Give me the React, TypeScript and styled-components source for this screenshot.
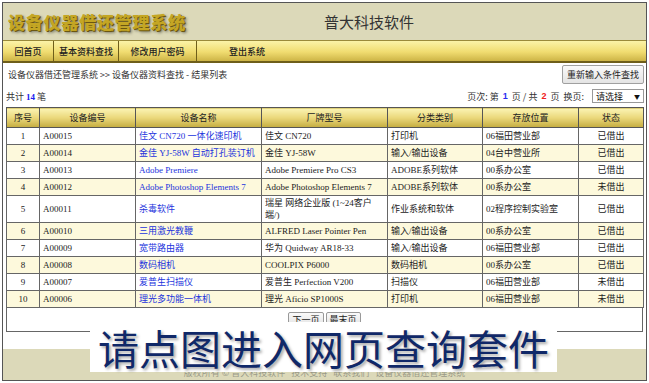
import styled, { createGlobalStyle } from 'styled-components'

const GlobalStyle = createGlobalStyle`
  html, body {
    margin: 0;
    padding: 0;
    background: #fff;
  }
  body {
    width: 649px;
    height: 383px;
    overflow: hidden;
    font-family: "Liberation Serif", "Noto Sans CJK SC", serif;
    font-size: 9px;
    color: #222;
  }
`

interface Device {
  no: number
  code: string
  name: string
  model: string
  category: string
  place: string
  status: string
}

const devices: Device[] = [
  { no: 1, code: 'A00015', name: '佳文 CN720 一体化速印机', model: '佳文 CN720', category: '打印机', place: '06福田营业部', status: '已借出' },
  { no: 2, code: 'A00014', name: '金佳 YJ-58W 自动打孔装订机', model: '金佳 YJ-58W', category: '输入/输出设备', place: '04台中营业所', status: '已借出' },
  { no: 3, code: 'A00013', name: 'Adobe Premiere', model: 'Adobe Premiere Pro CS3', category: 'ADOBE系列软体', place: '00系办公室', status: '已借出' },
  { no: 4, code: 'A00012', name: 'Adobe Photoshop Elements 7', model: 'Adobe Photoshop Elements 7', category: 'ADOBE系列软体', place: '00系办公室', status: '未借出' },
  { no: 5, code: 'A00011', name: '杀毒软件', model: '瑞星 网络企业版 (1~24客户端/)', category: '作业系统和软体', place: '02程序控制实验室', status: '已借出' },
  { no: 6, code: 'A00010', name: '三用激光教鞭', model: 'ALFRED Laser Pointer Pen', category: '输入/输出设备', place: '00系办公室', status: '已借出' },
  { no: 7, code: 'A00009', name: '宽带路由器', model: '华为 Quidway AR18-33', category: '输入/输出设备', place: '06福田营业部', status: '已借出' },
  { no: 8, code: 'A00008', name: '数码相机', model: 'COOLPIX P6000', category: '数码相机', place: '00系办公室', status: '已借出' },
  { no: 9, code: 'A00007', name: '爱普生扫描仪', model: '爱普生 Perfection V200', category: '扫描仪', place: '06福田营业部', status: '未借出' },
  { no: 10, code: 'A00006', name: '理光多功能一体机', model: '理光 Aficio SP1000S', category: '打印机', place: '06福田营业部', status: '未借出' },
]

const navItems = [
  { label: '回首页', width: 51 },
  { label: '基本资料查找', width: 65 },
  { label: '修改用户密码', width: 78 },
  { label: '登出系统', width: 100 },
]

const columns = [
  { label: '序号', width: 33 },
  { label: '设备编号', width: 96 },
  { label: '设备名称', width: 126 },
  { label: '厂牌型号', width: 126 },
  { label: '分类类别', width: 95 },
  { label: '存放位置', width: 96 },
  { label: '状态', width: 65 },
]

const App = () => {
  return (
    <>
      <GlobalStyle />
      <Frame>
        <Header>
          <Title>设备仪器借还管理系统</Title>
          <Company>普大科技软件</Company>
        </Header>
        <NavBar>
          {navItems.map((item) => (
            <NavItem key={item.label} $width={item.width} $last={item.label === '登出系统'}>
              {item.label}
            </NavItem>
          ))}
        </NavBar>
        <Content>
          <Breadcrumb>
            <span>设备仪器借还管理系统 &gt;&gt; 设备仪器资料查找 - 结果列表</span>
            <GrayButton>重新输入条件查找</GrayButton>
          </Breadcrumb>
          <InfoRow>
            <span>
              共计 <Count>14</Count> 笔
            </span>
            <PageInfo>
              页次: 第 <PageNum $color="#2a2af0">1</PageNum> 页 / 共 <PageNum $color="#f02020">2</PageNum> 页 &nbsp;换页:
              <FakeSelect>
                请选择<Arrow>▼</Arrow>
              </FakeSelect>
            </PageInfo>
          </InfoRow>
          <Table>
            <colgroup>
              {columns.map((c) => (
                <col key={c.label} style={{ width: c.width }} />
              ))}
            </colgroup>
            <thead>
              <tr>
                {columns.map((c) => (
                  <Th key={c.label}>{c.label}</Th>
                ))}
              </tr>
            </thead>
            <tbody>
              {devices.map((d) => (
                <Row key={d.code} $even={d.no % 2 === 0}>
                  <Td $center>{d.no}</Td>
                  <Td>{d.code}</Td>
                  <Td>
                    <DeviceLink>{d.name}</DeviceLink>
                  </Td>
                  <Td>{d.model}</Td>
                  <Td>{d.category}</Td>
                  <Td>{d.place}</Td>
                  <Td $center>{d.status}</Td>
                </Row>
              ))}
            </tbody>
          </Table>
          <Pager>
            <SmallButton>下一页</SmallButton>
            <SmallButton>最末页</SmallButton>
          </Pager>
        </Content>
        <Footer>版权所有 &copy; 普大科技软件 &nbsp; 技术支持 &nbsp; 联系我们 &nbsp; 设备仪器借还管理系统</Footer>
        <Banner>请点图进入网页查询套件</Banner>
      </Frame>
    </>
  )
}

export default App

const Frame = styled.div`
  position: relative;
  box-sizing: border-box;
  width: 645px;
  height: 379px;
  margin: 2px;
  border: 1px solid #555;
  background: #fff;
  display: flex;
  flex-direction: column;
  overflow: hidden;
`

const Header = styled.div`
  height: 37px;
  background: #dcd9b9;
  display: grid;
  grid-template-columns: 321px 1fr;
  align-items: center;
`

const Title = styled.div`
  padding-left: 5px;
  font-family: "Noto Sans CJK SC", sans-serif;
  font-weight: 900;
  font-size: 17px;
  letter-spacing: 0.8px;
  color: #c4a624;
  text-shadow: 1px 1px 0 #6a5610, 2px 2px 3px rgba(0, 0, 0, 0.45);
`

const Company = styled.div`
  font-family: "Noto Sans CJK SC", sans-serif;
  font-size: 15px;
  color: #333;
`

const NavBar = styled.div`
  display: flex;
  height: 20px;
  border-top: 1px solid #9a8a3a;
  border-bottom: 2px solid #6e5e1a;
  background: linear-gradient(#fbf3a8, #f0dc70 55%, #cdb446);
`

const NavItem = styled.div<{ $width: number; $last?: boolean }>`
  box-sizing: border-box;
  width: ${(p) => p.$width}px;
  display: flex;
  align-items: center;
  justify-content: center;
  border-right: ${(p) => (p.$last ? 'none' : '1px solid #6e5e1a')};
  font-family: "Noto Sans CJK SC", sans-serif;
  font-size: 9px;
  font-weight: 500;
  color: #222;
`

const Content = styled.div`
  padding: 0 2px 0 3px;
  display: flex;
  flex-direction: column;
`

const Breadcrumb = styled.div`
  height: 22px;
  display: flex;
  align-items: center;
  justify-content: space-between;
  padding-left: 2px;
  color: #333;
  font-family: "Noto Sans CJK SC", sans-serif;
`

const GrayButton = styled.div`
  box-sizing: border-box;
  height: 19px;
  padding: 0 4px;
  display: flex;
  align-items: center;
  background: linear-gradient(#fafafa, #e4e4e4);
  border: 1px solid #a0a0a0;
  border-radius: 2px;
  font-family: "Noto Sans CJK SC", sans-serif;
  font-size: 9px;
  color: #222;
`

const InfoRow = styled.div`
  height: 22px;
  display: flex;
  align-items: center;
  justify-content: space-between;
  font-family: "Noto Sans CJK SC", sans-serif;
  color: #333;
`

const Count = styled.b`
  font-family: "Liberation Serif", serif;
  color: #2020f0;
`

const PageInfo = styled.div`
  display: flex;
  align-items: center;
  gap: 2px;
  white-space: pre;
`

const PageNum = styled.b<{ $color: string }>`
  font-family: "Liberation Sans", sans-serif;
  color: ${(p) => p.$color};
`

const FakeSelect = styled.div`
  box-sizing: border-box;
  width: 52px;
  height: 14px;
  margin-left: 6px;
  padding: 0 3px;
  display: flex;
  align-items: center;
  justify-content: space-between;
  border: 1px solid #999;
  background: #fff;
  color: #111;
`

const Arrow = styled.span`
  font-size: 6px;
`

const Table = styled.table`
  width: 637px;
  table-layout: fixed;
  border-collapse: collapse;
  border: 1px solid #333;
`

const Th = styled.th`
  height: 19px;
  padding: 0;
  border: 1px solid #555;
  background: linear-gradient(#fbf4b4, #ead77a 50%, #c4ac40);
  font-family: "Noto Sans CJK SC", sans-serif;
  font-weight: 400;
  font-size: 9px;
  color: #222;
`

const Row = styled.tr<{ $even: boolean }>`
  height: 17px;
  background: ${(p) => (p.$even ? '#fdf9dc' : '#fff')};
`

const Td = styled.td<{ $center?: boolean }>`
  padding: 1px 3px;
  border: 1px solid #666;
  line-height: 12px;
  text-align: ${(p) => (p.$center ? 'center' : 'left')};
  color: #222;
`

const DeviceLink = styled.a`
  color: #2233dd;
  text-decoration: none;
`

const Pager = styled.div`
  box-sizing: border-box;
  width: 637px;
  height: 24px;
  border: 1px solid #666;
  border-top: none;
  display: flex;
  justify-content: center;
  align-items: flex-start;
  padding-top: 4px;
  gap: 2px;
`

const SmallButton = styled.div`
  box-sizing: border-box;
  height: 15px;
  padding: 0 3px;
  display: flex;
  align-items: center;
  border: 1px solid #999;
  border-radius: 2px;
  background: linear-gradient(#fafafa, #e2e2e2);
  font-family: "Noto Sans CJK SC", sans-serif;
  font-size: 9px;
  color: #222;
`

const Footer = styled.div`
  margin-top: auto;
  height: 31px;
  background: #dcd9b9;
  display: flex;
  align-items: flex-end;
  justify-content: center;
  padding-bottom: 1px;
  box-sizing: border-box;
  font-family: "Noto Sans CJK SC", sans-serif;
  font-size: 9px;
  color: #9a9a88;
`

const Banner = styled.div`
  position: absolute;
  left: 87px;
  top: 319px;
  width: 467px;
  height: 50px;
  background: #fff;
  display: flex;
  align-items: center;
  justify-content: center;
  font-family: "Noto Sans CJK SC", sans-serif;
  font-size: 41px;
  font-weight: 400;
  line-height: 1;
  color: #102868;
  text-shadow: 2px 2px 3px rgba(0, 0, 0, 0.35);
`
